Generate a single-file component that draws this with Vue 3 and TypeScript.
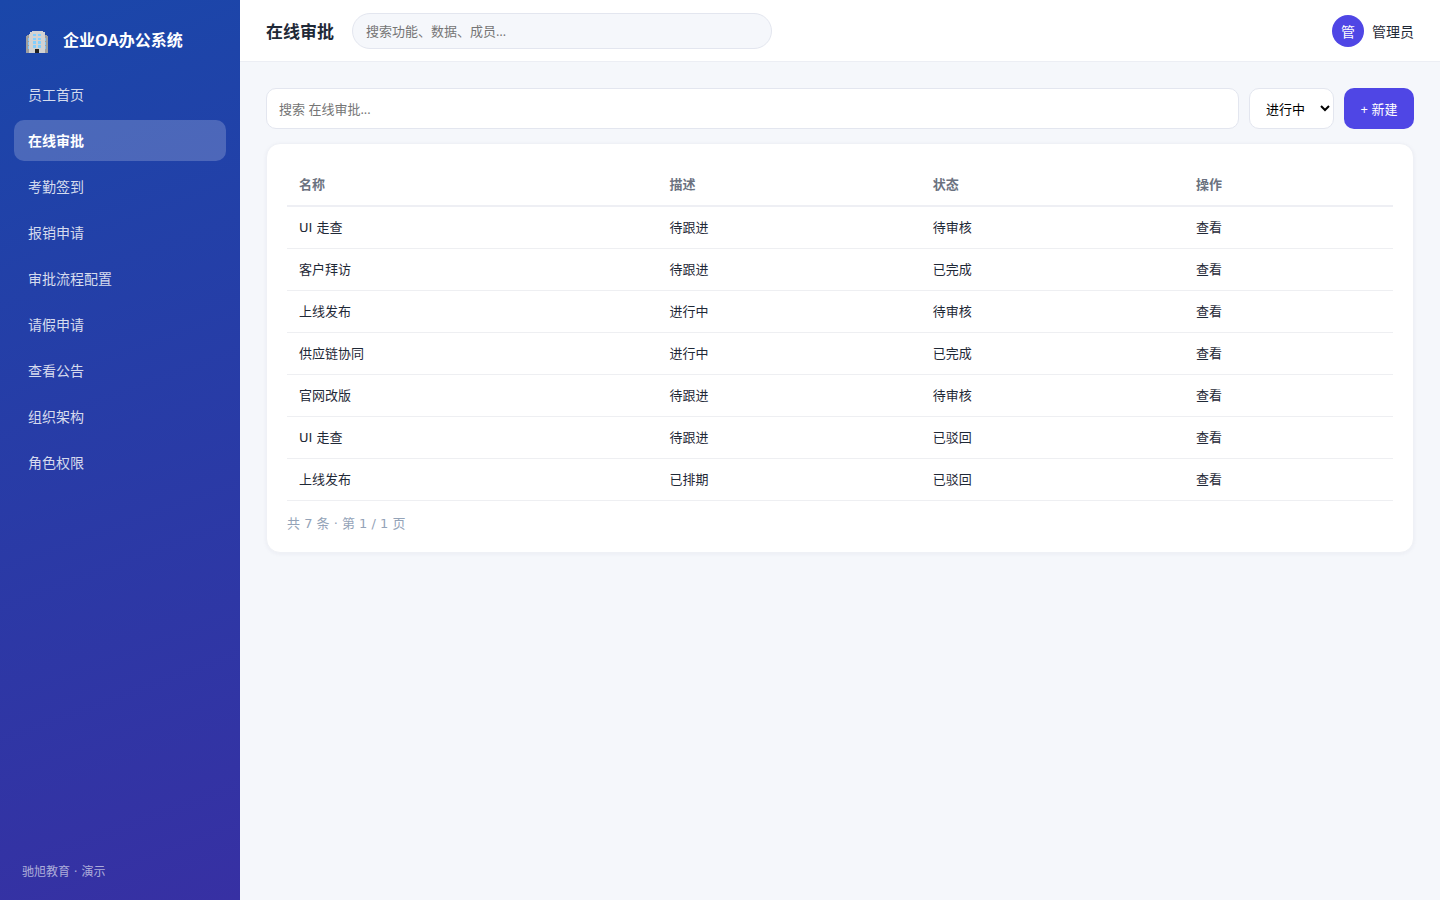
<script setup lang="ts">
import { ref } from 'vue'

interface Row {
  name: string
  desc: string
  status: string
}

const navItems: string[] = [
  '员工首页',
  '在线审批',
  '考勤签到',
  '报销申请',
  '审批流程配置',
  '请假申请',
  '查看公告',
  '组织架构',
  '角色权限',
]
const active = ref('在线审批')
const filter = ref('进行中')
const globalSearch = ref('')
const keyword = ref('')

const rows: Row[] = [
  { name: 'UI 走查', desc: '待跟进', status: '待审核' },
  { name: '客户拜访', desc: '待跟进', status: '已完成' },
  { name: '上线发布', desc: '进行中', status: '待审核' },
  { name: '供应链协同', desc: '进行中', status: '已完成' },
  { name: '官网改版', desc: '待跟进', status: '待审核' },
  { name: 'UI 走查', desc: '待跟进', status: '已驳回' },
  { name: '上线发布', desc: '已排期', status: '已驳回' },
]
</script>

<template>
  <div class="layout">
    <aside class="sidebar">
      <div class="brand">
        <svg class="logo" viewBox="0 0 22 22" shape-rendering="crispEdges" aria-hidden="true">
          <path d="M0 5H1V4H21V5H22V22H0Z" fill="#9e9e9e" />
          <path d="M2 7h1v3H2zM2 11h1v3H2zM2 15h1v3H2zM19 7h1v3h-1zM19 11h1v3h-1zM19 15h1v3h-1z" fill="#82c4f5" />
          <path d="M3 3H4V1H6V0H17V1H19V22H3Z" fill="#d2d2d2" />
          <path d="M7 3h3v2H7zM12 3h3v2h-3zM7 7h3v2H7zM12 7h3v2h-3zM7 10h3v3H7zM12 10h3v3h-3zM7 14h3v3H7zM12 14h3v3h-3z" fill="#82cfff" />
          <path d="M9 18h4v4H9z" fill="#212121" />
        </svg>
        <span>企业OA办公系统</span>
      </div>
      <nav class="nav">
        <a
          v-for="item in navItems"
          :key="item"
          href="#"
          class="nav-item"
          :class="{ active: item === active }"
          @click.prevent="active = item"
        >{{ item }}</a>
      </nav>
      <div class="side-foot">驰旭教育 · 演示</div>
    </aside>

    <div class="main">
      <header class="topbar">
        <h1 class="title">在线审批</h1>
        <input v-model="globalSearch" class="global-search" type="text" aria-label="全局搜索" placeholder="搜索功能、数据、成员…" />
        <div class="user">
          <span class="avatar">管</span>
          <span>管理员</span>
        </div>
      </header>

      <main class="content">
        <div class="toolbar">
          <input v-model="keyword" class="field" type="text" aria-label="搜索" placeholder="搜索 在线审批..." />
          <select v-model="filter" class="select" aria-label="状态">
            <option>进行中</option>
            <option>已完成</option>
            <option>已驳回</option>
          </select>
          <button class="primary" type="button">+ 新建</button>
        </div>

        <section class="card">
          <table class="table">
            <thead>
              <tr>
                <th class="col-name">名称</th>
                <th class="col-mid">描述</th>
                <th class="col-mid">状态</th>
                <th>操作</th>
              </tr>
            </thead>
            <tbody>
              <tr v-for="(row, i) in rows" :key="i">
                <td>{{ row.name }}</td>
                <td>{{ row.desc }}</td>
                <td>{{ row.status }}</td>
                <td><button class="link" type="button">查看</button></td>
              </tr>
            </tbody>
          </table>
          <div class="pager">共 7 条 · 第 1 / 1 页</div>
        </section>
      </main>
    </div>
  </div>
</template>

<style>
body {
  margin: 0;
  background: #f5f7fb;
}
</style>

<style scoped>
.layout,
.layout * {
  box-sizing: border-box;
}
.layout {
  display: flex;
  min-height: 100vh;
  font-family: 'Open Sans', 'Noto Sans CJK SC', sans-serif;
  font-size: 14px;
  color: #1f2937;
  background: #f5f7fb;
}
input,
select,
button {
  font-family: inherit;
}
.sidebar {
  width: 240px;
  flex-shrink: 0;
  display: flex;
  flex-direction: column;
  padding: 20px 14px;
  color: #fff;
  background: linear-gradient(160deg, #1a47aa, #3730a3);
}
.brand {
  display: flex;
  align-items: flex-end;
  gap: 15px;
  height: 33px;
  padding: 0 12px;
  margin-bottom: 21px;
  font-size: 16px;
  line-height: 26px;
  font-weight: 700;
}
.logo {
  width: 22px;
  height: 22px;
}
.nav {
  display: flex;
  flex-direction: column;
  gap: 5px;
}
.nav-item {
  padding: 11px 14px;
  border-radius: 10px;
  font-size: 14px;
  line-height: 19px;
  color: rgba(255, 255, 255, 0.82);
  text-decoration: none;
}
.nav-item.active {
  color: #fff;
  font-weight: 600;
  background: rgba(255, 255, 255, 0.2);
}
.side-foot {
  margin-top: auto;
  padding: 0 8px;
  font-family: 'DejaVu Sans', 'Noto Sans CJK SC', sans-serif;
  font-size: 12px;
  line-height: 16px;
  color: rgba(255, 255, 255, 0.6);
}
.main {
  flex: 1;
  min-width: 0;
}
.topbar {
  display: flex;
  align-items: center;
  gap: 18px;
  height: 62px;
  padding: 0 26px;
  background: #fff;
  border-bottom: 1px solid #eceef4;
}
.title {
  margin: 0;
  font-size: 17px;
  font-weight: 700;
}
.global-search {
  width: 420px;
  height: 36px;
  padding: 0 13px;
  border: 1px solid #e3e6ef;
  border-radius: 18px;
  background: #f5f7fb;
  font-size: 13px;
}
.user {
  display: flex;
  align-items: center;
  gap: 8px;
  margin-left: auto;
}
.avatar {
  display: flex;
  align-items: center;
  justify-content: center;
  width: 32px;
  height: 32px;
  border-radius: 50%;
  background: #4f46e5;
  color: #fff;
  font-size: 14px;
}
.content {
  padding: 26px;
}
.toolbar {
  display: flex;
  gap: 10px;
  height: 41px;
  margin-bottom: 14px;
}
.field {
  flex: 1;
  min-width: 0;
  padding: 0 12px;
  border: 1px solid #e3e6ef;
  border-radius: 10px;
  background: #fff;
  font-size: 13px;
}
.select {
  width: 85px;
  padding: 0 0 0 12px;
  border: 1px solid #e3e6ef;
  border-radius: 10px;
  background: #fff;
  color: #000;
  font-size: 13px;
}
.primary {
  width: 70px;
  padding: 0;
  border: 0;
  border-radius: 10px;
  background: #4f46e5;
  color: #fff;
  font-size: 13px;
}
.card {
  padding: 20px;
  border: 1px solid #eff1f6;
  border-radius: 14px;
  background: #fff;
  box-shadow: 0 1px 4px rgba(30, 41, 90, 0.05);
}
.table {
  width: 100%;
  border-collapse: collapse;
  font-family: 'DejaVu Sans', 'Noto Sans CJK SC', sans-serif;
  font-size: 13px;
  line-height: 17px;
}
.table th {
  padding: 12px;
  height: 42px;
  text-align: left;
  font-weight: 600;
  color: #6b7280;
  border-bottom: 2px solid #eeeff4;
}
.table td {
  padding: 12px;
  height: 42px;
  border-bottom: 1px solid #eeeff2;
}
.col-name {
  width: 33.5%;
}
.col-mid {
  width: 23.8%;
}
.link {
  padding: 0;
  border: 0;
  background: none;
  color: inherit;
  font-size: 13px;
  line-height: 17px;
}
.pager {
  margin-top: 14px;
  font-family: 'DejaVu Sans', 'Noto Sans CJK SC', sans-serif;
  font-size: 13px;
  line-height: 17px;
  color: #94a3b8;
}
</style>
